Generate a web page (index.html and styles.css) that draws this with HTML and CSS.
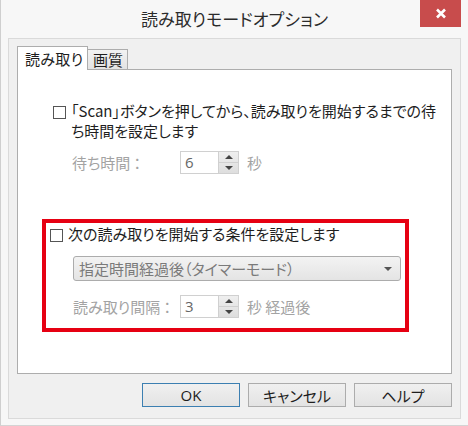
FILE: index.html
```html
<!DOCTYPE html>
<html lang="ja">
<head>
<meta charset="utf-8">
<link rel="stylesheet" href="styles.css">
</head>
<body>
<div class="window">
  <div class="titlebar">
    <div class="title">読み取りモードオプション</div>
    <div class="close"><svg width="12" height="11" viewBox="0 0 12 11"><path d="M2 1.5 L10 9.5 M10 1.5 L2 9.5" stroke="#fff" stroke-width="2.6" stroke-linecap="butt"/></svg></div>
  </div>
  <div class="client">
    <div class="tabs">
      <div class="tab active">読み取り</div>
      <div class="tab">画質</div>
    </div>
    <div class="panel">
      <div class="sec1">
        <div class="check-row">
          <span class="checkbox"></span>
          <span class="label">「Scan」ボタンを押してから、読み取りを開始するまでの待<br>ち時間を設定します</span>
        </div>
        <div class="field-row row1">
          <span class="flabel">待ち時間 ：</span>
          <span class="spin"><span class="spin-val">6</span><span class="spin-btns"><span class="up"></span><span class="down"></span></span></span>
          <span class="unit">秒</span>
        </div>
      </div>
      <div class="redbox">
        <div class="check-row row2">
          <span class="checkbox"></span>
          <span class="label">次の読み取りを開始する条件を設定します</span>
        </div>
        <div class="dropdown"><span>指定時間経過後（タイマーモード）</span><span class="arrow"></span></div>
        <div class="field-row row3">
          <span class="flabel">読み取り間隔 ：</span>
          <span class="spin"><span class="spin-val">3</span><span class="spin-btns"><span class="up"></span><span class="down"></span></span></span>
          <span class="unit">秒 経過後</span>
        </div>
      </div>
    </div>
    <div class="buttons">
      <div class="btn default">OK</div>
      <div class="btn">キャンセル</div>
      <div class="btn">ヘルプ</div>
    </div>
  </div>
</div>
</body>
</html>
```
FILE: styles.css
```css
* { box-sizing: border-box; }
html, body { margin: 0; padding: 0; }
body {
  width: 468px;
  height: 426px;
  overflow: hidden;
  background: #f7f7f7;
  font-family: "Noto Sans CJK JP", "Noto Sans", sans-serif;
  font-feature-settings: "palt";
  color: #1e1e1e;
}
.window {
  width: 468px;
  height: 426px;
  border-left: 1px solid #cfcfcf;
  border-bottom: 1px solid #d4d4d4;
  position: relative;
}
.titlebar {
  height: 38px;
  display: flex;
  justify-content: center;
  align-items: center;
  padding-bottom: 2px;
}
.title {
  font-size: 17px;
  color: #2b2b2b;
  letter-spacing: 0.1px;
}
.close {
  position: absolute;
  top: 0;
  left: 419px;
  width: 41px;
  height: 27px;
  background: #c84c4c;
  display: flex;
  align-items: center;
  justify-content: center;
}
.client {
  margin-left: 7px;
  width: 453px;
  height: 381px;
  background: #f0f0f0;
  border: 1px solid #dadada;
  padding: 7px 8px 0 8px;
}
.tabs {
  display: flex;
  align-items: flex-end;
  height: 23px;
  position: relative;
  z-index: 1;
}
.tab {
  font-size: 15px;
  line-height: 1;
  border: 1px solid #adadad;
  border-bottom: none;
  background: linear-gradient(#f2f2f2, #e3e3e3);
  height: 20px;
  padding: 2px 4px 0 5px;
  margin-left: -1px;
}
.tab.active {
  background: #fff;
  height: 24px;
  margin-bottom: -1px;
  width: 71px;
  padding: 4px 0 0 7px;
  margin-left: 0;
  font-size: 15px;
  letter-spacing: 0.3px;
}
.panel {
  background: #fff;
  border: 1px solid #adadad;
  height: 305px;
  width: 435px;
  padding-top: 31px;
}
.sec1 {
  margin-left: 35px;
}
.check-row {
  display: flex;
  align-items: flex-start;
  font-size: 15px;
  line-height: 20px;
}
.checkbox {
  flex: none;
  width: 13px;
  height: 13px;
  border: 1px solid #555;
  background: #fff;
  margin-top: 5px;
  margin-right: 5px;
}
.label { white-space: nowrap; }
.field-row {
  display: flex;
  align-items: center;
  font-size: 15px;
  color: #a3a3a3;
}
.row1 {
  margin-top: 10px;
  margin-left: 19px;
}
.flabel {
  width: 108px;
  flex: none;
}
.spin {
  display: flex;
  width: 59px;
  height: 23px;
  border: 1px solid #d0d0d0;
  background: #fff;
}
.spin-val {
  flex: 1;
  color: #666;
  padding-left: 4px;
  line-height: 20px;
  font-family: "Open Sans", "Noto Sans", sans-serif;
  font-size: 15px;
}
.spin-btns {
  width: 20px;
  display: flex;
  flex-direction: column;
  background: linear-gradient(#efefef, #dedede);
  border-left: 1px solid #d0d0d0;
}
.spin-btns .up, .spin-btns .down {
  flex: 1;
  position: relative;
}
.spin-btns .up { border-bottom: 1px solid #d0d0d0; }
.spin-btns .up::after, .spin-btns .down::after {
  content: "";
  position: absolute;
  left: 6px;
  top: 3px;
  border-left: 4px solid transparent;
  border-right: 4px solid transparent;
}
.spin-btns .up::after { border-bottom: 4px solid #444; }
.spin-btns .down::after { border-top: 4px solid #444; top: 3px; }
.unit { margin-left: 8px; }
.redbox {
  margin-top: 45px;
  margin-left: 24px;
  width: 367px;
  height: 113px;
  border: 4px solid #e60012;
  padding: 1px 4px 0 4px;
}
.row2 .label { color: #1e1e1e; }
.dropdown {
  margin-top: 12px;
  margin-left: 23px;
  width: 328px;
  height: 25px;
  border: 1px solid #acacac;
  border-radius: 3px;
  background: linear-gradient(#f3f3f3, #e4e4e4);
  display: flex;
  align-items: center;
  justify-content: space-between;
  padding: 0 8px 0 5px;
  font-size: 15px;
  color: #7a7a7a;
}
.dropdown .arrow {
  border-left: 4px solid transparent;
  border-right: 4px solid transparent;
  border-top: 4px solid #555;
}
.row3 {
  margin-top: 14px;
  margin-left: 23px;
}
.row3 .spin { margin-left: -1px; }
.buttons {
  display: flex;
  justify-content: flex-end;
  gap: 8px;
  margin-top: 9px;
  width: 435px;
}
.btn {
  width: 98px;
  height: 24px;
  border: 1px solid #acacac;
  background: linear-gradient(#f0f0f0, #e3e3e3);
  display: flex;
  align-items: center;
  justify-content: center;
  font-size: 15px;
  color: #1e1e1e;
}
.btn.default {
  border-color: #3c7fb1;
  font-family: "Open Sans", "Noto Sans", sans-serif;
}
```
